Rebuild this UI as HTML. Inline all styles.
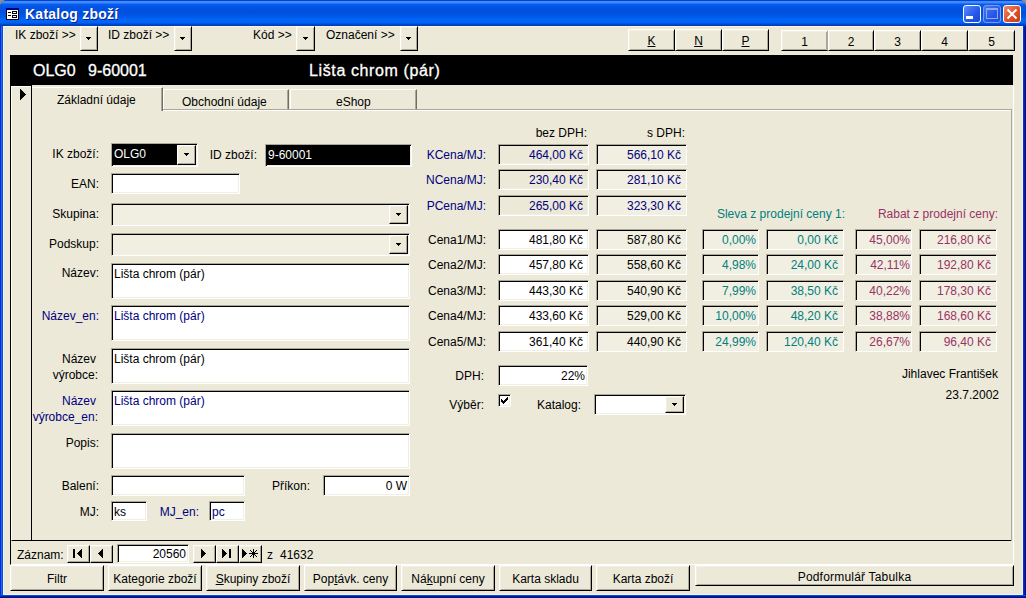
<!DOCTYPE html>
<html><head><meta charset="utf-8">
<style>
*{margin:0;padding:0;box-sizing:border-box}
html,body{width:1026px;height:598px;overflow:hidden;background:#8E8E8E;font-family:"Liberation Sans",sans-serif;font-size:12px;color:#000}
.a{position:absolute}
.t{position:absolute;white-space:nowrap;line-height:13px}
.r{text-align:right}
.sunk{position:absolute;border:1px solid;border-color:#ACA899 #FFF #FFF #ACA899;box-shadow:inset 1px 1px #000,inset -1px -1px #F1EFE2;background:#ECE9D8}
.w{background:#fff}
.rais{position:absolute;border:1px solid;border-color:#FFF #000 #000 #FFF;box-shadow:inset 1px 1px #F1EFE2,inset -1px -1px #ACA899;background:#ECE9D8;text-align:center}
.hd{font-size:16px;color:#fff;line-height:17px;-webkit-text-stroke:0.3px #fff}
.blue{color:#000080}
.teal{color:#008080}
.mar{color:#993366}
.val{position:absolute;right:5px;top:3px;white-space:nowrap;line-height:13px}
.dd{position:absolute;top:2px;right:2px;bottom:2px;width:16px;border:1px solid;border-color:#F1EFE2 #716F64 #716F64 #F1EFE2;box-shadow:inset -1px -1px #ACA899;background:#ECE9D8}
.dd:after{content:"";position:absolute;left:5px;top:7px;border-left:3px solid transparent;border-right:3px solid transparent;border-top:3px solid #000}
</style>
<style>
.tab{position:absolute;border:1px solid;border-bottom:none;border-color:#fff #716F64 transparent #fff;box-shadow:inset -1px 0 #ACA899;background:#ECE9D8}
.tab.sel{border-bottom:none;border-left-color:transparent}
.ddb{position:absolute;top:1px;right:1px;bottom:1px;width:19px;border:1px solid;border-color:#fff #000 #000 #fff;box-shadow:inset -1px -1px #ACA899,inset 1px 1px #F1EFE2;background:#ECE9D8}
.nb{position:absolute;border:1px solid;border-color:#fff #000 #000 #fff;box-shadow:inset -1px -1px #ACA899,inset 1px 1px #F1EFE2;background:#ECE9D8}
</style>
</head><body>
<!-- window frame -->
<div class="a" style="left:0;top:0;width:1026px;height:598px;background:#0842D8;border-radius:7px 7px 0 0"></div>
<div class="a" style="left:0;top:0;width:1026px;height:26px;border-radius:7px 7px 0 0;background:linear-gradient(#0A3FD0 0px,#0A3FD0 1px,#3D8FFF 1px,#3A8AFA 3px,#0A5CF0 4px,#0055E5 7px,#0050DE 12px,#0058E8 17px,#0066F8 19px,#0064F5 23px,#0048D0 24px,#0038B8 26px)"></div>
<div class="a" style="left:0;top:26px;width:3px;height:572px;background:linear-gradient(90deg,#0A28D8 0,#0A28D8 1px,#1A6EF8 1px,#1A6EF8 2px,#0050E0 2px)"></div>
<div class="a" style="left:1023px;top:26px;width:3px;height:572px;background:linear-gradient(90deg,#0034E0 0,#0034E0 1px,#0020A8 1px,#0020A8 2px,#001288 2px)"></div>
<div class="a" style="left:0;top:595px;width:1026px;height:3px;background:linear-gradient(#0844EC 0,#0844EC 1px,#0020A4 1px,#0020A4 2px,#001284 2px)"></div>
<div class="a" style="left:3px;top:26px;width:1020px;height:569px;background:#ECE9D8;border:1px solid #FCF5DE"></div>
<!-- title -->
<div class="a" style="left:6px;top:8px;width:13px;height:12px;background:#000"><div class="a" style="left:0;top:0;width:13px;height:2px;background:#000080"></div><div class="a" style="left:1px;top:2px;width:11px;height:9px;background:#fff"></div>
<div class="a" style="left:2px;top:4px;width:3px;height:1px;background:#000"></div><div class="a" style="left:2px;top:7px;width:3px;height:1px;background:#000"></div>
<div class="a" style="left:6px;top:3px;width:5px;height:3px;border:1px solid #000"></div><div class="a" style="left:6px;top:7px;width:5px;height:3px;border:1px solid #000"></div></div>
<div class="t" style="left:25px;top:6px;font-size:14px;font-weight:bold;color:#fff;text-shadow:1px 1px #0A1E8C;line-height:16px;letter-spacing:0.25px">Katalog zboží</div>

<div class="a" style="left:963px;top:5px;width:18px;height:18px;border:1px solid #fff;border-radius:3px;background:linear-gradient(135deg,#5C8CFF,#2457E8 60%,#1B46D0)"><div class="a" style="left:2px;top:10px;width:7px;height:3px;background:#fff"></div></div>
<div class="a" style="left:983px;top:5px;width:18px;height:18px;border:1px solid #7A9BF0;border-radius:3px;background:linear-gradient(135deg,#4A78F0,#2457E8 60%,#1E4CD8)"><div class="a" style="left:2px;top:2px;width:12px;height:11px;border:1px solid #8FA6EE;border-top-width:2px"></div></div>
<div class="a" style="left:1003px;top:5px;width:18px;height:18px;border:1px solid #fff;border-radius:3px;background:linear-gradient(135deg,#F08A6A,#E0502A 55%,#C83A18)">
<svg class="a" style="left:1px;top:1px" width="14" height="14"><path d="M2.5 2.5L11.5 11.5M11.5 2.5L2.5 11.5" stroke="#fff" stroke-width="2"/></svg></div>

<!-- toolbar -->
<div class="t" style="left:15px;top:29px">IK zboží &gt;&gt;</div>
<div class="rais" style="left:80px;top:26px;width:18px;height:25px"><svg class="a" style="left:5px;top:10px" width="5" height="3" shape-rendering="crispEdges"><rect x="0" y="0" width="5" height="1"/><rect x="1" y="1" width="3" height="1"/><rect x="2" y="2" width="1" height="1"/></svg></div>
<div class="t" style="left:108px;top:29px">ID zboží &gt;&gt;</div>
<div class="rais" style="left:174px;top:26px;width:18px;height:25px"><svg class="a" style="left:5px;top:10px" width="5" height="3" shape-rendering="crispEdges"><rect x="0" y="0" width="5" height="1"/><rect x="1" y="1" width="3" height="1"/><rect x="2" y="2" width="1" height="1"/></svg></div>
<div class="t" style="left:253px;top:29px">Kód &gt;&gt;</div>
<div class="rais" style="left:296px;top:26px;width:19px;height:25px"><svg class="a" style="left:6px;top:10px" width="5" height="3" shape-rendering="crispEdges"><rect x="0" y="0" width="5" height="1"/><rect x="1" y="1" width="3" height="1"/><rect x="2" y="2" width="1" height="1"/></svg></div>
<div class="t" style="left:326px;top:29px">Označení &gt;&gt;</div>
<div class="rais" style="left:400px;top:26px;width:18px;height:25px"><svg class="a" style="left:5px;top:10px" width="5" height="3" shape-rendering="crispEdges"><rect x="0" y="0" width="5" height="1"/><rect x="1" y="1" width="3" height="1"/><rect x="2" y="2" width="1" height="1"/></svg></div>

<div class="rais t" style="left:628px;top:29px;width:47px;height:22px;line-height:23px"><u>K</u></div>
<div class="rais t" style="left:675px;top:29px;width:47px;height:22px;line-height:23px"><u>N</u></div>
<div class="rais t" style="left:722px;top:29px;width:47px;height:22px;line-height:23px"><u>P</u></div>
<div class="rais t" style="left:781px;top:30px;width:47px;height:21px;line-height:23px;border-right-color:#ACA899">1</div>
<div class="rais t" style="left:828px;top:30px;width:46px;height:21px;line-height:23px">2</div>
<div class="rais t" style="left:874px;top:30px;width:47px;height:21px;line-height:23px">3</div>
<div class="rais t" style="left:921px;top:30px;width:47px;height:21px;line-height:23px">4</div>
<div class="rais t" style="left:968px;top:30px;width:47px;height:21px;line-height:23px">5</div>

<!-- black header -->
<div class="a" style="left:10px;top:55px;width:1003px;height:30px;background:#000"></div>
<div class="t hd" style="left:33px;top:62px">OLG0</div><div class="t hd" style="left:88px;top:62px">9-60001</div>
<div class="t hd" style="left:309px;top:62px;letter-spacing:0.62px">Lišta chrom (pár)</div>

<!-- form section -->
<div class="a" style="left:10px;top:85px;width:1004px;height:480px;border-left:1px solid #000;border-right:1px solid #fff;border-bottom:1px solid #fff"></div>
<div class="a" style="left:11px;top:85px;width:21px;height:456px;border-right:1px solid #000;border-bottom:1px solid #000;border-left:1px solid #fff"></div>
<div class="a" style="left:11px;top:85px;width:20px;height:1px;background:#000"></div><div class="a" style="left:11px;top:86px;width:20px;height:1px;background:#fff"></div><svg class="a" style="left:20px;top:89px" width="6" height="11" shape-rendering="crispEdges"><rect x="0" y="0" width="1" height="11"/><rect x="1" y="1" width="1" height="9"/><rect x="2" y="2" width="1" height="7"/><rect x="3" y="3" width="1" height="5"/><rect x="4" y="4" width="1" height="3"/><rect x="5" y="5" width="1" height="1"/></svg>
<div class="a" style="left:32px;top:540px;width:980px;height:1px;background:#000"></div>

<div class="a" style="left:163px;top:109px;width:849px;height:1px;background:#ACA899"></div>
<div class="a" style="left:163px;top:110px;width:849px;height:1px;background:#fff"></div>
<div class="a" style="left:1011px;top:109px;width:1px;height:432px;background:#ACA899"></div>
<div class="tab" style="left:163px;top:89px;width:126px;height:20px"></div>
<div class="tab" style="left:290px;top:89px;width:127px;height:20px"></div>
<div class="tab sel" style="left:32px;top:87px;width:131px;height:24px"></div>
<div class="t " style="left:57px;top:94px;">Základní údaje</div>
<div class="t " style="left:182px;top:96px;">Obchodní údaje</div>
<div class="t " style="left:336px;top:96px;">eShop</div>
<div class="t " style="right:927px;top:148px;">IK zboží:</div>
<div class="sunk" style="left:111px;top:143px;width:87px;height:24px;background:#000;"><div class="t " style="left:2px;top:4px;color:#fff">OLG0</div><div class="ddb"><svg class="a" style="left:6px;top:7px" width="5" height="3" shape-rendering="crispEdges"><rect x="0" y="0" width="5" height="1"/><rect x="1" y="1" width="3" height="1"/><rect x="2" y="2" width="1" height="1"/></svg></div></div>
<div class="t " style="right:769px;top:149px;">ID zboží:</div>
<div class="sunk" style="left:265px;top:144px;width:147px;height:23px;background:#000;"><div class="t " style="left:2px;top:4px;color:#fff">9-60001</div></div>
<div class="t " style="right:927px;top:178px;">EAN:</div>
<div class="sunk" style="left:111px;top:173px;width:129px;height:21px;background:#fff;"></div>
<div class="t " style="right:927px;top:208px;">Skupina:</div>
<div class="sunk" style="left:111px;top:203px;width:299px;height:23px;background:#F1EFE2;"><div class="ddb"><svg class="a" style="left:6px;top:7px" width="5" height="3" shape-rendering="crispEdges"><rect x="0" y="0" width="5" height="1"/><rect x="1" y="1" width="3" height="1"/><rect x="2" y="2" width="1" height="1"/></svg></div></div>
<div class="t " style="right:927px;top:238px;">Podskup:</div>
<div class="sunk" style="left:111px;top:233px;width:299px;height:23px;background:#F1EFE2;"><div class="ddb"><svg class="a" style="left:6px;top:7px" width="5" height="3" shape-rendering="crispEdges"><rect x="0" y="0" width="5" height="1"/><rect x="1" y="1" width="3" height="1"/><rect x="2" y="2" width="1" height="1"/></svg></div></div>
<div class="t " style="right:927px;top:267px;">Název:</div>
<div class="sunk" style="left:111px;top:263px;width:299px;height:36px;background:#fff;"><div class="t " style="left:2px;top:4px;">Lišta chrom (pár)</div></div>
<div class="t blue" style="right:927px;top:310px;">Název_en:</div>
<div class="sunk" style="left:111px;top:305px;width:299px;height:36px;background:#fff;"><div class="t blue" style="left:2px;top:4px;">Lišta chrom (pár)</div></div>
<div class="t " style="right:930px;top:353px;">Název</div>
<div class="t " style="right:928px;top:369px;">výrobce:</div>
<div class="sunk" style="left:111px;top:348px;width:299px;height:36px;background:#fff;"><div class="t " style="left:2px;top:4px;">Lišta chrom (pár)</div></div>
<div class="t blue" style="right:930px;top:395px;">Název</div>
<div class="t blue" style="right:928px;top:411px;">výrobce_en:</div>
<div class="sunk" style="left:111px;top:390px;width:299px;height:36px;background:#fff;"><div class="t blue" style="left:2px;top:4px;">Lišta chrom (pár)</div></div>
<div class="t " style="right:927px;top:437px;">Popis:</div>
<div class="sunk" style="left:111px;top:433px;width:299px;height:36px;background:#fff;"></div>
<div class="t " style="right:927px;top:480px;">Balení:</div>
<div class="sunk" style="left:111px;top:475px;width:134px;height:21px;background:#fff;"></div>
<div class="t " style="right:716px;top:480px;">Příkon:</div>
<div class="sunk" style="left:323px;top:475px;width:87px;height:21px;background:#fff;"><div class="t " style="right:2px;top:4px;">0 W</div></div>
<div class="t " style="right:927px;top:506px;">MJ:</div>
<div class="sunk" style="left:111px;top:501px;width:36px;height:20px;background:#fff;"><div class="t " style="left:2px;top:4px;">ks</div></div>
<div class="t blue" style="right:827px;top:506px;">MJ_en:</div>
<div class="sunk" style="left:209px;top:501px;width:36px;height:20px;background:#fff;"><div class="t blue" style="left:2px;top:4px;">pc</div></div>
<div class="t " style="right:439px;top:127px;">bez DPH:</div>
<div class="t " style="right:341px;top:127px;">s DPH:</div>
<div class="t blue" style="right:540px;top:149px;">KCena/MJ:</div>
<div class="sunk" style="left:498px;top:144px;width:91px;height:21px;background:#ECE9D8;"><div class="t blue" style="right:5px;top:4px;">464,00 Kč</div></div>
<div class="sunk" style="left:596px;top:144px;width:91px;height:21px;background:#F1EFE2;"><div class="t blue" style="right:5px;top:4px;">566,10 Kč</div></div>
<div class="t blue" style="right:540px;top:174px;">NCena/MJ:</div>
<div class="sunk" style="left:498px;top:169px;width:91px;height:21px;background:#ECE9D8;"><div class="t blue" style="right:5px;top:4px;">230,40 Kč</div></div>
<div class="sunk" style="left:596px;top:169px;width:91px;height:21px;background:#F1EFE2;"><div class="t blue" style="right:5px;top:4px;">281,10 Kč</div></div>
<div class="t blue" style="right:540px;top:200px;">PCena/MJ:</div>
<div class="sunk" style="left:498px;top:195px;width:91px;height:21px;background:#ECE9D8;"><div class="t blue" style="right:5px;top:4px;">265,00 Kč</div></div>
<div class="sunk" style="left:596px;top:195px;width:91px;height:21px;background:#F1EFE2;"><div class="t blue" style="right:5px;top:4px;">323,30 Kč</div></div>
<div class="t " style="right:540px;top:234px;">Cena1/MJ:</div>
<div class="sunk" style="left:498px;top:229px;width:91px;height:21px;background:#fff;"><div class="t " style="right:5px;top:4px;">481,80 Kč</div></div>
<div class="sunk" style="left:596px;top:229px;width:91px;height:21px;background:#F1EFE2;"><div class="t " style="right:5px;top:4px;">587,80 Kč</div></div>
<div class="t " style="right:540px;top:259px;">Cena2/MJ:</div>
<div class="sunk" style="left:498px;top:254px;width:91px;height:21px;background:#fff;"><div class="t " style="right:5px;top:4px;">457,80 Kč</div></div>
<div class="sunk" style="left:596px;top:254px;width:91px;height:21px;background:#F1EFE2;"><div class="t " style="right:5px;top:4px;">558,60 Kč</div></div>
<div class="t " style="right:540px;top:285px;">Cena3/MJ:</div>
<div class="sunk" style="left:498px;top:280px;width:91px;height:21px;background:#fff;"><div class="t " style="right:5px;top:4px;">443,30 Kč</div></div>
<div class="sunk" style="left:596px;top:280px;width:91px;height:21px;background:#F1EFE2;"><div class="t " style="right:5px;top:4px;">540,90 Kč</div></div>
<div class="t " style="right:540px;top:310px;">Cena4/MJ:</div>
<div class="sunk" style="left:498px;top:305px;width:91px;height:21px;background:#fff;"><div class="t " style="right:5px;top:4px;">433,60 Kč</div></div>
<div class="sunk" style="left:596px;top:305px;width:91px;height:21px;background:#F1EFE2;"><div class="t " style="right:5px;top:4px;">529,00 Kč</div></div>
<div class="t " style="right:540px;top:336px;">Cena5/MJ:</div>
<div class="sunk" style="left:498px;top:331px;width:91px;height:21px;background:#fff;"><div class="t " style="right:5px;top:4px;">361,40 Kč</div></div>
<div class="sunk" style="left:596px;top:331px;width:91px;height:21px;background:#F1EFE2;"><div class="t " style="right:5px;top:4px;">440,90 Kč</div></div>
<div class="t " style="right:542px;top:370px;">DPH:</div>
<div class="sunk" style="left:498px;top:365px;width:90px;height:21px;background:#fff;"><div class="t " style="right:2px;top:4px;">22%</div></div>
<div class="t " style="right:542px;top:399px;">Výběr:</div>
<div class="a" style="left:498px;top:394px;width:13px;height:13px;border:1px solid;border-color:#ACA899 #fff #fff #ACA899;box-shadow:inset 1px 1px #000,inset -1px -1px #F1EFE2;background:#fff"><svg class="a" style="left:2px;top:2px" width="7" height="7" shape-rendering="crispEdges"><rect x="6" y="0" width="1" height="1"/><rect x="5" y="1" width="1" height="1"/><rect x="6" y="1" width="1" height="1"/><rect x="0" y="2" width="1" height="1"/><rect x="4" y="2" width="1" height="1"/><rect x="5" y="2" width="1" height="1"/><rect x="6" y="2" width="1" height="1"/><rect x="0" y="3" width="1" height="1"/><rect x="1" y="3" width="1" height="1"/><rect x="3" y="3" width="1" height="1"/><rect x="4" y="3" width="1" height="1"/><rect x="5" y="3" width="1" height="1"/><rect x="0" y="4" width="1" height="1"/><rect x="1" y="4" width="1" height="1"/><rect x="2" y="4" width="1" height="1"/><rect x="3" y="4" width="1" height="1"/><rect x="4" y="4" width="1" height="1"/><rect x="1" y="5" width="1" height="1"/><rect x="2" y="5" width="1" height="1"/><rect x="3" y="5" width="1" height="1"/><rect x="2" y="6" width="1" height="1"/></svg></div>
<div class="t " style="right:445px;top:399px;">Katalog:</div>
<div class="sunk" style="left:594px;top:394px;width:92px;height:21px;background:#fff;"><div class="ddb"><svg class="a" style="left:6px;top:6px" width="5" height="3" shape-rendering="crispEdges"><rect x="0" y="0" width="5" height="1"/><rect x="1" y="1" width="3" height="1"/><rect x="2" y="2" width="1" height="1"/></svg></div></div>
<div class="t teal" style="right:181px;top:208px;">Sleva z prodejní ceny 1:</div>
<div class="t mar" style="right:28px;top:208px;">Rabat z prodejní ceny:</div>
<div class="sunk" style="left:702px;top:229px;width:57px;height:21px;background:#F1EFE2;"><div class="t teal" style="right:2px;top:4px;">0,00%</div></div>
<div class="sunk" style="left:766px;top:229px;width:78px;height:21px;background:#F1EFE2;"><div class="t teal" style="right:5px;top:4px;">0,00 Kč</div></div>
<div class="sunk" style="left:855px;top:229px;width:57px;height:21px;background:#F1EFE2;"><div class="t mar" style="right:1px;top:4px;">45,00%</div></div>
<div class="sunk" style="left:919px;top:229px;width:78px;height:21px;background:#F1EFE2;"><div class="t mar" style="right:5px;top:4px;">216,80 Kč</div></div>
<div class="sunk" style="left:702px;top:254px;width:57px;height:21px;background:#F1EFE2;"><div class="t teal" style="right:2px;top:4px;">4,98%</div></div>
<div class="sunk" style="left:766px;top:254px;width:78px;height:21px;background:#F1EFE2;"><div class="t teal" style="right:5px;top:4px;">24,00 Kč</div></div>
<div class="sunk" style="left:855px;top:254px;width:57px;height:21px;background:#F1EFE2;"><div class="t mar" style="right:1px;top:4px;">42,11%</div></div>
<div class="sunk" style="left:919px;top:254px;width:78px;height:21px;background:#F1EFE2;"><div class="t mar" style="right:5px;top:4px;">192,80 Kč</div></div>
<div class="sunk" style="left:702px;top:280px;width:57px;height:21px;background:#F1EFE2;"><div class="t teal" style="right:2px;top:4px;">7,99%</div></div>
<div class="sunk" style="left:766px;top:280px;width:78px;height:21px;background:#F1EFE2;"><div class="t teal" style="right:5px;top:4px;">38,50 Kč</div></div>
<div class="sunk" style="left:855px;top:280px;width:57px;height:21px;background:#F1EFE2;"><div class="t mar" style="right:1px;top:4px;">40,22%</div></div>
<div class="sunk" style="left:919px;top:280px;width:78px;height:21px;background:#F1EFE2;"><div class="t mar" style="right:5px;top:4px;">178,30 Kč</div></div>
<div class="sunk" style="left:702px;top:305px;width:57px;height:21px;background:#F1EFE2;"><div class="t teal" style="right:2px;top:4px;">10,00%</div></div>
<div class="sunk" style="left:766px;top:305px;width:78px;height:21px;background:#F1EFE2;"><div class="t teal" style="right:5px;top:4px;">48,20 Kč</div></div>
<div class="sunk" style="left:855px;top:305px;width:57px;height:21px;background:#F1EFE2;"><div class="t mar" style="right:1px;top:4px;">38,88%</div></div>
<div class="sunk" style="left:919px;top:305px;width:78px;height:21px;background:#F1EFE2;"><div class="t mar" style="right:5px;top:4px;">168,60 Kč</div></div>
<div class="sunk" style="left:702px;top:331px;width:57px;height:21px;background:#F1EFE2;"><div class="t teal" style="right:2px;top:4px;">24,99%</div></div>
<div class="sunk" style="left:766px;top:331px;width:78px;height:21px;background:#F1EFE2;"><div class="t teal" style="right:5px;top:4px;">120,40 Kč</div></div>
<div class="sunk" style="left:855px;top:331px;width:57px;height:21px;background:#F1EFE2;"><div class="t mar" style="right:1px;top:4px;">26,67%</div></div>
<div class="sunk" style="left:919px;top:331px;width:78px;height:21px;background:#F1EFE2;"><div class="t mar" style="right:5px;top:4px;">96,40 Kč</div></div>
<div class="t " style="right:28px;top:368px;">Jihlavec František</div>
<div class="t " style="right:27px;top:389px;">23.7.2002</div>
<div class="t " style="left:17px;top:549px;">Záznam:</div>
<div class="nb" style="left:67px;top:545px;width:23px;height:18px"><svg class="a" style="left:5px;top:3px" width="9" height="9" shape-rendering="crispEdges"><rect x="0" y="0" width="2" height="9"/><rect x="4" y="4" width="1" height="1"/><rect x="5" y="3" width="1" height="3"/><rect x="6" y="2" width="1" height="5"/><rect x="7" y="1" width="1" height="7"/><rect x="8" y="0" width="1" height="9"/></svg></div>
<div class="nb" style="left:90px;top:545px;width:23px;height:18px"><svg class="a" style="left:7px;top:3px" width="5" height="9" shape-rendering="crispEdges"><rect x="0" y="4" width="1" height="1"/><rect x="1" y="3" width="1" height="3"/><rect x="2" y="2" width="1" height="5"/><rect x="3" y="1" width="1" height="7"/><rect x="4" y="0" width="1" height="9"/></svg></div>
<div class="a" style="left:117px;top:544px;width:72px;height:19px;border:1px solid;border-color:#ACA899 #fff #fff #ACA899;box-shadow:inset 1px 1px #000,inset -1px -1px #F1EFE2;background:#fff"><div class="t" style="right:2px;top:3px">20560</div></div>
<div class="nb" style="left:193px;top:545px;width:23px;height:18px"><svg class="a" style="left:7px;top:3px" width="5" height="9" shape-rendering="crispEdges"><rect x="0" y="0" width="1" height="9"/><rect x="1" y="1" width="1" height="7"/><rect x="2" y="2" width="1" height="5"/><rect x="3" y="3" width="1" height="3"/><rect x="4" y="4" width="1" height="1"/></svg></div>
<div class="nb" style="left:216px;top:545px;width:23px;height:18px"><svg class="a" style="left:5px;top:3px" width="9" height="9" shape-rendering="crispEdges"><rect x="0" y="0" width="1" height="9"/><rect x="1" y="1" width="1" height="7"/><rect x="2" y="2" width="1" height="5"/><rect x="3" y="3" width="1" height="3"/><rect x="4" y="4" width="1" height="1"/><rect x="7" y="0" width="2" height="9"/></svg></div>
<div class="nb" style="left:239px;top:545px;width:23px;height:18px"><svg class="a" style="left:2px;top:3px" width="16" height="9" shape-rendering="crispEdges"><rect x="0" y="0" width="1" height="9"/><rect x="1" y="1" width="1" height="7"/><rect x="2" y="2" width="1" height="5"/><rect x="3" y="3" width="1" height="3"/><rect x="4" y="4" width="1" height="1"/><rect x="11" y="0" width="1" height="1"/><rect x="10" y="4" width="1" height="1"/><rect x="11" y="3" width="1" height="1"/><rect x="12" y="4" width="1" height="1"/><rect x="11" y="6" width="1" height="1"/><rect x="9" y="2" width="1" height="1"/><rect x="14" y="4" width="1" height="1"/><rect x="13" y="2" width="1" height="1"/><rect x="14" y="1" width="1" height="1"/><rect x="14" y="7" width="1" height="1"/><rect x="11" y="2" width="1" height="1"/><rect x="11" y="5" width="1" height="1"/><rect x="10" y="3" width="1" height="1"/><rect x="11" y="8" width="1" height="1"/><rect x="12" y="3" width="1" height="1"/><rect x="9" y="4" width="1" height="1"/><rect x="7" y="4" width="1" height="1"/><rect x="13" y="4" width="1" height="1"/><rect x="11" y="1" width="1" height="1"/><rect x="11" y="7" width="1" height="1"/><rect x="10" y="5" width="1" height="1"/><rect x="11" y="4" width="1" height="1"/><rect x="12" y="5" width="1" height="1"/><rect x="15" y="4" width="1" height="1"/><rect x="8" y="1" width="1" height="1"/><rect x="8" y="4" width="1" height="1"/><rect x="8" y="7" width="1" height="1"/><rect x="9" y="6" width="1" height="1"/><rect x="13" y="6" width="1" height="1"/></svg></div>
<div class="t " style="left:267px;top:549px;">z</div>
<div class="t " style="left:280px;top:549px;">41632</div>
<div class="rais t" style="left:10px;top:565px;width:94px;height:26px;line-height:26px">Filtr</div>
<div class="rais t" style="left:108px;top:565px;width:94px;height:26px;line-height:26px">Kate<u>g</u>orie zboží</div>
<div class="rais t" style="left:206px;top:565px;width:94px;height:26px;line-height:26px"><u>S</u>kupiny zboží</div>
<div class="rais t" style="left:304px;top:565px;width:93px;height:26px;line-height:26px">Pop<u>t</u>ávk. ceny</div>
<div class="rais t" style="left:401px;top:565px;width:94px;height:26px;line-height:26px">Ná<u>k</u>upní ceny</div>
<div class="rais t" style="left:499px;top:565px;width:93px;height:26px;line-height:26px">Karta skladu</div>
<div class="rais t" style="left:596px;top:565px;width:94px;height:26px;line-height:26px">Karta zboží</div>
<div class="rais t" style="left:695px;top:565px;width:319px;height:21px;line-height:23px;letter-spacing:0.2px">Podformulář Tabulka</div>
</body></html>
